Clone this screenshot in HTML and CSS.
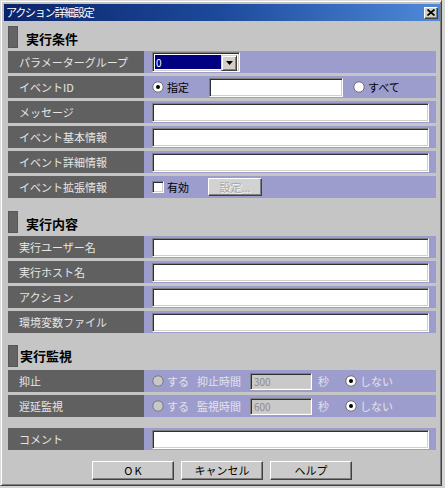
FILE: index.html
```html
<!DOCTYPE html>
<html lang="ja">
<head>
<meta charset="utf-8">
<title>アクション詳細設定</title>
<link rel="stylesheet" href="styles.css">
</head>
<body>
<div class="window">
  <div class="titlebar">
    <span class="title">アクション詳細設定</span>
    <span class="close"><svg width="8" height="7" viewBox="0 0 8 7"><path d="M0.5 0.5L7.5 6.5M7.5 0.5L0.5 6.5" stroke="#000" stroke-width="1.7"/></svg></span>
  </div>
  <div class="content">
    <div class="section s1"><span class="mark"></span><span class="sec-title">実行条件</span></div>
    <div class="row">
      <div class="label">パラメーターグループ</div>
      <div class="value">
        <div class="combo"><span class="combo-text">0</span><span class="combo-btn"><svg width="7" height="4" viewBox="0 0 7 4"><path d="M0 0H7L3.5 4Z" fill="#000"/></svg></span></div>
      </div>
    </div>
    <div class="row">
      <div class="label">イベントID</div>
      <div class="value">
        <span class="radio"><svg width="12" height="12" viewBox="0 0 12 12"><circle cx="6" cy="6" r="5.2" fill="#fff" stroke="#6e6e6e"/><circle cx="6" cy="6" r="2" fill="#000"/></svg>指定</span>
        <div class="field id"></div>
        <span class="radio all"><svg width="12" height="12" viewBox="0 0 12 12"><circle cx="6" cy="6" r="5.2" fill="#fff" stroke="#6e6e6e"/></svg>すべて</span>
      </div>
    </div>
    <div class="row">
      <div class="label">メッセージ</div>
      <div class="value"><div class="field wide"></div></div>
    </div>
    <div class="row">
      <div class="label">イベント基本情報</div>
      <div class="value"><div class="field wide"></div></div>
    </div>
    <div class="row">
      <div class="label">イベント詳細情報</div>
      <div class="value"><div class="field wide"></div></div>
    </div>
    <div class="row">
      <div class="label">イベント拡張情報</div>
      <div class="value">
        <span class="check"><span class="box"></span>有効</span>
        <span class="btn small disabled">設定...</span>
      </div>
    </div>

    <div class="section s2"><span class="mark"></span><span class="sec-title">実行内容</span></div>
    <div class="row">
      <div class="label">実行ユーザー名</div>
      <div class="value"><div class="field wide"></div></div>
    </div>
    <div class="row">
      <div class="label">実行ホスト名</div>
      <div class="value"><div class="field wide"></div></div>
    </div>
    <div class="row">
      <div class="label">アクション</div>
      <div class="value"><div class="field wide"></div></div>
    </div>
    <div class="row">
      <div class="label">環境変数ファイル</div>
      <div class="value"><div class="field wide"></div></div>
    </div>

    <div class="section s3"><span class="mark"></span><span class="sec-title">実行監視</span></div>
    <div class="row">
      <div class="label">抑止</div>
      <div class="value dis">
        <span class="radio"><svg width="12" height="12" viewBox="0 0 12 12"><circle cx="6" cy="6" r="5.2" fill="#c8c8c8" stroke="#7a7a7a"/></svg>する</span>
        <span class="sub">抑止時間</span>
        <div class="field time">300</div>
        <span class="unit">秒</span>
        <span class="radio no"><svg width="12" height="12" viewBox="0 0 12 12"><circle cx="6" cy="6" r="5.2" fill="#fff" stroke="#6e6e6e"/><circle cx="6" cy="6" r="2" fill="#000"/></svg>しない</span>
      </div>
    </div>
    <div class="row">
      <div class="label">遅延監視</div>
      <div class="value dis">
        <span class="radio"><svg width="12" height="12" viewBox="0 0 12 12"><circle cx="6" cy="6" r="5.2" fill="#c8c8c8" stroke="#7a7a7a"/></svg>する</span>
        <span class="sub">監視時間</span>
        <div class="field time">600</div>
        <span class="unit">秒</span>
        <span class="radio no"><svg width="12" height="12" viewBox="0 0 12 12"><circle cx="6" cy="6" r="5.2" fill="#fff" stroke="#6e6e6e"/><circle cx="6" cy="6" r="2" fill="#000"/></svg>しない</span>
      </div>
    </div>

    <div class="row comment">
      <div class="label">コメント</div>
      <div class="value"><div class="field wide"></div></div>
    </div>

    <div class="buttons">
      <span class="btn ok">OK</span>
      <span class="btn">キャンセル</span>
      <span class="btn">ヘルプ</span>
    </div>
  </div>
</div>
</body>
</html>
```

FILE: styles.css
```css
* { box-sizing: border-box; margin: 0; padding: 0; }
html, body { background: #d4d4d4; }
body {
  margin: 0;
  font-family: "Noto Sans CJK JP", "Noto Sans", sans-serif;
  font-size: 11px;
  color: #000;
}
.window {
  width: 442px;
  height: 486px;
  background: #c5c5c5;
  border: 1px solid;
  border-color: #dcdcdc #404040 #404040 #dcdcdc;
  box-shadow: inset 1px 1px #ffffff, inset -1px -1px #808080;
  padding: 3px 1px 1px 3px;
  display: flex;
  flex-direction: column;
}
.titlebar {
  height: 17px;
  background: linear-gradient(to right, #0a246a 0%, #1d4a9c 50%, #4f8ad8 100%);
  display: flex;
  align-items: center;
  justify-content: space-between;
  padding: 0 2px 0 2px;
}
.title {
  color: #fff;
  font-size: 11px;
  line-height: 17px;
  letter-spacing: -1.2px;
}
.close {
  width: 14px;
  height: 12px;
  background: #d4d0c8;
  border: 1px solid;
  border-color: #fff #404040 #404040 #fff;
  box-shadow: inset -1px -1px #808080;
  display: flex;
  align-items: center;
  justify-content: center;
}
.content {
  padding: 0 4px;
  display: flex;
  flex-direction: column;
}
.section {
  display: flex;
  align-items: center;
  height: 22px;
}
.s1 { margin-top: 5px; }
.s2 { margin-top: 13px; }
.s3 { margin-top: 12px; }
.mark {
  width: 10px;
  height: 22px;
  background: #646464;
  border: 1px solid #575757;
}
.sec-title {
  font-size: 13px;
  font-weight: bold;
  line-height: 22px;
  margin-left: 8px;
  padding-top: 3px;
}
.s3 .sec-title { margin-left: 2px; padding-top: 0; }
.row {
  display: grid;
  grid-template-columns: 136px 1fr;
  height: 22px;
  margin-top: 3px;
}
.row.comment { margin-top: 11px; }
.label {
  background: #606060;
  color: #e6e6e6;
  padding-left: 11px;
  line-height: 22px;
  white-space: nowrap;
}
.value {
  background: #9d9dcd;
  display: flex;
  align-items: center;
  padding-left: 8px;
  white-space: nowrap;
}
.field {
  height: 19px;
  background: #fff;
  border: 1px solid;
  border-color: #808080 #ffffff #ffffff #808080;
  box-shadow: inset 1px 1px #303030, inset -1px -1px #d4d0c8;
}
.field.wide { width: 277px; }
.field.id { width: 134px; margin-left: 20px; }
.combo {
  width: 88px;
  height: 20px;
  display: flex;
  padding: 2px;
  background: #fff;
  border: 1px solid;
  border-color: #808080 #ffffff #ffffff #808080;
  box-shadow: inset 1px 1px #303030, inset -1px -1px #d4d0c8;
}
.combo-text {
  flex: 1;
  background: #000080;
  color: #fff;
  font-size: 10px;
  line-height: 16px;
  padding-left: 1px;
}
.combo-btn {
  width: 16px;
  height: 16px;
  background: #d4d0c8;
  border: 1px solid;
  border-color: #d4d0c8 #404040 #404040 #d4d0c8;
  box-shadow: inset 1px 1px #fff, inset -1px -1px #808080;
  display: flex;
  align-items: center;
  justify-content: center;
}
.radio {
  display: inline-flex;
  align-items: center;
  line-height: 14px;
}
.radio svg { margin-right: 3px; flex: none; }
.radio.all { margin-left: 10px; }
.check {
  display: inline-flex;
  align-items: center;
  line-height: 14px;
}
.box {
  width: 12px;
  height: 12px;
  background: #fff;
  border: 1px solid;
  border-color: #808080 #ffffff #ffffff #808080;
  box-shadow: inset 1px 1px #303030, inset -1px -1px #d4d0c8;
  margin-right: 3px;
}
.btn {
  display: inline-flex;
  align-items: center;
  justify-content: center;
  width: 82px;
  height: 19px;
  background: #cbcbcb;
  border: 1px solid;
  border-color: #ffffff #404040 #404040 #ffffff;
  box-shadow: inset -1px -1px #808080;
  font-size: 11px;
  line-height: 17px;
}
.btn.ok { letter-spacing: 2px; padding-left: 2px; }
.btn.small {
  width: 54px;
  height: 18px;
  margin-left: 19px;
  background: #d2d2d2;
}
.btn.disabled {
  color: #a8a8a8;
  text-shadow: 1px 1px #f4f4f4;
}
.value.dis .radio,
.sub, .unit { color: #e2e2ec; }
.sub { margin-left: 8px; }
.field.time {
  width: 62px;
  height: 17px;
  margin-left: 9px;
  background: #c9c9c9;
  color: #8c8c8c;
  font-size: 10px;
  line-height: 15px;
  padding-left: 3px;
}
.unit { margin-left: 6px; }
.radio.no { margin-left: 16px; color: #e2e2ec; }
.buttons {
  display: flex;
  justify-content: center;
  gap: 7px;
  margin-top: 11px;
}
```
